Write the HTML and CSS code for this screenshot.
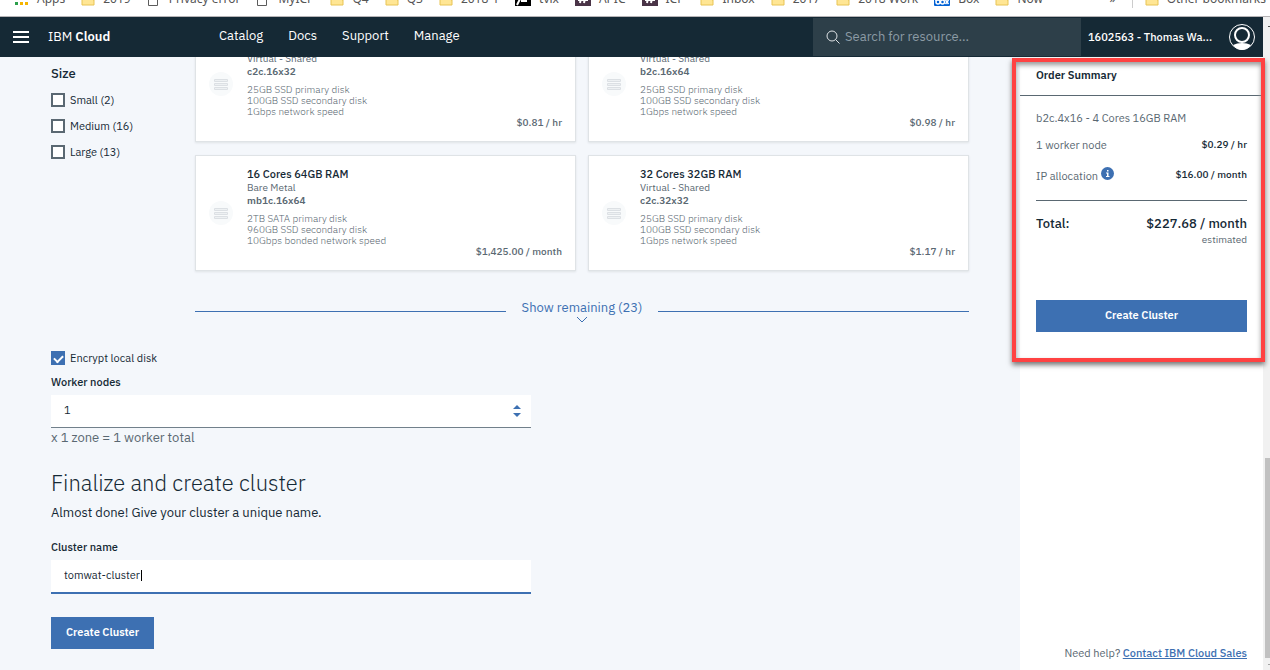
FILE: index.html
```html
<!DOCTYPE html>
<html lang="en">
<head>
<meta charset="utf-8">
<title>IBM Cloud - Create cluster</title>
<link rel="stylesheet" href="styles.css">
</head>
<body>
<svg class="defs" aria-hidden="true">
  <symbol id="folder" viewBox="0 0 14 16"><path d="M1 3h9l2 2v5h1v5H1z" fill="#ffe694" stroke="#e8c455"/></symbol>
  <symbol id="page" viewBox="0 0 14 16"><path d="M1.500 1.500h9v14h-9z" fill="#fff" stroke="#5c5c5c"/></symbol>
  <symbol id="hash" viewBox="0 0 16 16"><path d="M0 0h16v16H0z" fill="#4a3447"/><path d="M7 3L5 13M11 3L9 13M3 6h10M3 10h10" stroke="#fff" stroke-width="2"/></symbol>
  <symbol id="server" viewBox="0 0 24 24"><circle cx="12" cy="12" r="12" fill="#f8fafb"/><path d="M5.500 7.500h13v2h-13zM5.500 11.500h13v2h-13zM5.500 15.500h13v2h-13z" fill="#eef1f3" stroke="#dce0e4"/></symbol>
</svg>
<nav class="bookmarks" aria-label="Bookmarks">
  <a href="#"><svg width="14" height="16"><path d="M0 12h3v3H0z" fill="#2c9f4b"/><path d="M5 12h3v3H5zM10 12h3v3h-3z" fill="#f5b400"/></svg>Apps</a>
  <a href="#"><svg width="14" height="16"><use href="#folder"/></svg>2019</a>
  <a href="#"><svg width="14" height="16"><use href="#page"/></svg>Privacy error</a>
  <a href="#"><svg width="14" height="16"><use href="#page"/></svg>MyICP</a>
  <a href="#"><svg width="14" height="16"><use href="#folder"/></svg>Q4</a>
  <a href="#"><svg width="14" height="16"><use href="#folder"/></svg>Q3</a>
  <a href="#"><svg width="14" height="16"><use href="#folder"/></svg>2018-1</a>
  <a href="#"><svg width="16" height="16"><path d="M0 0h16v16H0z" fill="#000"/><path d="M2 15l4-8M6 11h5v-3h4" fill="none" stroke="#fff" stroke-width="2"/></svg>tvix</a>
  <a href="#"><svg width="16" height="16"><use href="#hash"/></svg>APIC</a>
  <a href="#"><svg width="16" height="16"><use href="#hash"/></svg>ICP</a>
  <a href="#"><svg width="14" height="16"><use href="#folder"/></svg>Inbox</a>
  <a href="#"><svg width="14" height="16"><use href="#folder"/></svg>2017</a>
  <a href="#"><svg width="14" height="16"><use href="#folder"/></svg>2018 Work</a>
  <a href="#"><svg width="16" height="16"><rect width="16" height="16" rx="1" fill="#0061d5"/><g fill="none" stroke="#fff" stroke-width="1.500"><path d="M2 7v4"/><circle cx="4" cy="12" r="2"/><circle cx="8.500" cy="12" r="2"/><path d="M11.500 10l3 4M14.500 10l-3 4"/></g></svg>Box</a>
  <a href="#"><svg width="14" height="16"><use href="#folder"/></svg>Now</a>
  <span class="more">»</span>
  <a class="other" href="#"><svg width="14" height="16"><use href="#folder"/></svg>Other bookmarks</a>
</nav>
<div class="window">
  <div class="app">
    <header class="header">
      <button class="menu" aria-label="Menu"><svg width="16" height="12"><path d="M0 1h16M0 6h16M0 11h16" stroke="#fff" stroke-width="2"/></svg></button>
      <a class="brand" href="#">IBM <b>Cloud</b></a>
      <nav class="nav"><a href="#">Catalog</a><a href="#">Docs</a><a href="#">Support</a><a href="#">Manage</a></nav>
      <label class="search">
        <svg width="14" height="14" fill="none" stroke="#dfe3e6"><circle cx="6" cy="6" r="5"/><path d="M9.500 9.500L13.500 13.500"/></svg>
        <input type="text" placeholder="Search for resource..." aria-label="Search for resource">
      </label>
      <button class="account">1602563 - Thomas Wa...
        <svg width="26" height="26" viewBox="0 0 26 26"><circle cx="13" cy="13" r="12.500" fill="none" stroke="#fff"/><path d="M4 21q4-2 9-2t9 2q-4 5-9 5t-9-5z" fill="#fff"/><circle cx="13" cy="11" r="7" fill="#152935" stroke="#fff" stroke-width="2"/></svg>
      </button>
    </header>
    <div class="columns">
      <main class="main">
        <div class="picker">
          <fieldset class="sizes">
            <legend>Size</legend>
            <label><input type="checkbox">Small (2)</label>
            <label><input type="checkbox">Medium (16)</label>
            <label><input type="checkbox">Large (13)</label>
          </fieldset>
          <div class="flavors">
            <div class="cards">
              <article class="card card-cut"><svg width="24" height="24"><use href="#server"/></svg><div class="info"><p class="kind">Virtual - Shared</p><p class="code">c2c.16x32</p><ul><li>25GB SSD primary disk</li><li>100GB SSD secondary disk</li><li>1Gbps network speed</li></ul></div><p class="price">$0.81 / hr</p></article>
              <article class="card card-cut"><svg width="24" height="24"><use href="#server"/></svg><div class="info"><p class="kind">Virtual - Shared</p><p class="code">b2c.16x64</p><ul><li>25GB SSD primary disk</li><li>100GB SSD secondary disk</li><li>1Gbps network speed</li></ul></div><p class="price">$0.98 / hr</p></article>
              <article class="card"><svg width="24" height="24"><use href="#server"/></svg><div class="info"><h3>16 Cores 64GB RAM</h3><p class="kind">Bare Metal</p><p class="code">mb1c.16x64</p><ul><li>2TB SATA primary disk</li><li>960GB SSD secondary disk</li><li>10Gbps bonded network speed</li></ul></div><p class="price">$1,425.00 / month</p></article>
              <article class="card"><svg width="24" height="24"><use href="#server"/></svg><div class="info"><h3>32 Cores 32GB RAM</h3><p class="kind">Virtual - Shared</p><p class="code">c2c.32x32</p><ul><li>25GB SSD primary disk</li><li>100GB SSD secondary disk</li><li>1Gbps network speed</li></ul></div><p class="price">$1.17 / hr</p></article>
            </div>
            <button class="remaining"><span>Show remaining (23)<svg width="12" height="7"><path d="M1 1l5 5 5-5" fill="none" stroke="#3d70b2"/></svg></span></button>
          </div>
        </div>
        <form class="form">
          <label class="encrypt"><input type="checkbox" checked>Encrypt local disk</label>
          <label class="field-label" for="nodes">Worker nodes</label>
          <div class="field">
            <input id="nodes" type="number" value="1">
            <svg class="stepper" width="8" height="12" fill="#3d70b2"><path d="M0 4l4-4 4 4zM0 8h8l-4 4z"/></svg>
          </div>
          <p class="hint">x 1 zone = 1 worker total</p>
          <h2>Finalize and create cluster</h2>
          <p class="lead">Almost done! Give your cluster a unique name.</p>
          <label class="field-label" for="name">Cluster name</label>
          <div class="field field-active">
            <input id="name" type="text" value="tomwat-cluster">
            <span class="caret"></span>
          </div>
          <button class="primary" type="button">Create Cluster</button>
        </form>
      </main>
      <aside class="summary">
        <h2>Order Summary</h2>
        <div class="order">
          <p class="machine">b2c.4x16 - 4 Cores 16GB RAM</p>
          <p class="row">1 worker node<b>$0.29 / hr</b></p>
          <p class="row ip"><span>IP allocation <svg width="13" height="13"><circle cx="6.500" cy="6.500" r="6.500" fill="#3d70b2"/><path d="M6 3h1.500v1.500H6zM5 5.500h2.500V9h1v1H5V9h1V6.500H5z" fill="#fff"/></svg></span><b>$16.00 / month</b></p>
          <p class="row total"><b>Total:</b><b>$227.68 / month</b></p>
          <p class="estimated">estimated</p>
          <button class="primary" type="button">Create Cluster</button>
        </div>
        <p class="help">Need help? <a href="#">Contact IBM Cloud Sales</a></p>
        <div class="highlight"></div>
      </aside>
    </div>
  </div>
  <div class="scrollbar"><i class="arrow-up"></i><div class="thumb"></div><i class="arrow-down"></i></div>
</div>
</body>
</html>
```
FILE: styles.css
```css
* { box-sizing: border-box; margin: 0; padding: 0; }
body { height: 100vh; overflow: hidden; display: flex; flex-direction: column; background: #f4f7fb; color: #152935; font: 11px/14px "IBM Plex Sans", Inter, sans-serif; }
button, input { font: inherit; color: inherit; border: 0; background: none; }
a { color: inherit; text-decoration: none; }
svg { flex: none; }
.defs { position: absolute; width: 0; height: 0; }

.bookmarks { flex: none; display: flex; gap: 16px; height: 17px; overflow: hidden; padding: 0 4px 0 15px; background: #fff; border-bottom: 1px solid #b6b4b6; color: #555; font: 12px/18px "Noto Sans", sans-serif; white-space: nowrap; }
.bookmarks a { display: flex; gap: 8px; height: 18px; margin-top: -10px; }
.more { margin: -10px 0 0 auto; }
.bookmarks .other { padding-left: 12px; border-left: 1px solid #ccc; }

.window { flex: 1; min-height: 0; display: flex; }
.app { flex: 1; min-width: 0; display: flex; flex-direction: column; }
.header { flex: none; display: flex; align-items: center; height: 40px; padding-left: 13px; background: #152935; color: #fff; font-size: 13px; }
.menu { display: flex; margin-right: 19px; }
.brand { width: 171px; }
.brand b { font-weight: 600; }
.nav { display: flex; gap: 25px; padding-bottom: 2px; font-weight: 400; }
.search { display: flex; align-items: center; gap: 5px; width: 268px; height: 38px; margin-left: auto; padding-left: 13px; background: #2d3f49; }
.search input { flex: 1; min-width: 0; }
.search input::placeholder { color: #8c9ba5; opacity: 1; }
.account { display: flex; align-items: center; justify-content: space-between; width: 182px; padding: 0 8px 0 7px; font-size: 11px; font-weight: 500; white-space: nowrap; }

.columns { flex: 1; min-height: 0; display: flex; }
.main { flex: 1; min-width: 0; padding: 0 51px; overflow: hidden; }
.picker { display: flex; }
.sizes { flex: none; width: 144px; padding-top: 10px; border: 0; }
.sizes legend { float: left; width: 100%; margin-bottom: 12px; font-size: 13px; font-weight: 500; }
.sizes label { clear: both; display: flex; align-items: center; gap: 5px; margin-bottom: 12px; }
input[type="checkbox"] { appearance: none; flex: none; width: 14px; height: 14px; border: 2px solid #5a6872; background: #fff; }
.encrypt input[type="checkbox"] { border: 0; background: #3d70b2; display: grid; place-items: center; }
.encrypt input::before { content: ""; width: 7px; height: 4px; border: solid #fff; border-width: 0 0 2px 2px; rotate: -45deg; margin-bottom: 1px; }

.flavors { flex: 1; min-width: 0; }
.cards { display: grid; grid-template-columns: 1fr 1fr; gap: 13px 12px; }
.card { display: flex; min-height: 116px; padding: 11px 13px 11px 13px; background: #fff; border: 1px solid #dfe3e6; box-shadow: 0 1px 2px #dfe3e6; }
.card-cut { min-height: 0; margin-top: -5px; padding-top: 0; border-top: 0; }
.card svg { align-self: flex-end; margin: 0 14px 34px 0; }
.info { flex: 1; color: #5a6872; line-height: 13px; font-size: 10px; }
.info h3 { color: #152935; font-size: 11px; line-height: 14px; font-weight: 500; }
.code { margin-bottom: 6px; font-weight: 600; }
.info ul { list-style: none; font-size: 10px; font-weight: 300; line-height: 11px; padding-bottom: 13px; }
.price { align-self: flex-end; color: #5a6872; font-size: 10px; font-weight: 500; line-height: 14px; }

.remaining { display: flex; gap: 16px; width: 100%; margin-top: 29px; color: #3d70b2; font-size: 13px; line-height: 16px; }
.remaining::before, .remaining::after { content: ""; flex: 1; height: 1px; margin-top: 11px; background: #3d70b2; }
.remaining svg { display: block; margin: 0 auto; }

.form { max-width: 480px; margin-top: 28px; }
.encrypt { display: flex; align-items: center; gap: 5px; margin-bottom: 10px; }
.field-label { display: block; margin-bottom: 6px; font-weight: 500; }
.field { position: relative; height: 33px; background: #fff; border-bottom: 1px solid #71808b; }
.field input { width: 100%; height: 32px; padding: 0 13px 2px; outline: 0; appearance: textfield; }
.field input::-webkit-inner-spin-button { appearance: none; }
.stepper { position: absolute; right: 10px; top: 10px; }
.hint { margin-top: 2px; color: #5a6872; font-size: 13px; line-height: 16px; }
.form h2 { margin-top: 22px; font-size: 22px; line-height: 30px; font-weight: 300; }
.lead { margin: 7px 0 19px; font-size: 13px; line-height: 16px; }
.field-active { height: 34px; border-bottom: 2px solid #3d70b2; }
.caret { position: absolute; left: 90px; top: 10px; width: 1px; height: 11px; background: #000; }
.primary { height: 32px; padding: 0 15px 2px; background: #3d70b2; color: #fff; font-weight: 600; white-space: nowrap; }
.form .primary { margin-top: 23px; }

.summary { position: relative; flex: none; display: flex; flex-direction: column; width: 243px; background: #fff; }
.summary h2 { height: 39px; padding: 11px 16px 0; border-bottom: 1px solid #5a6872; font-size: 11px; font-weight: 600; }
.order { padding: 15px 16px; color: #5a6872; }
.order b { color: #152935; font-size: 10px; font-weight: 500; }
.row { display: flex; justify-content: space-between; margin-top: 13px; }
.ip { margin-top: 15px; padding-bottom: 16px; border-bottom: 1px solid #5a6872; line-height: 16px; }
.ip svg { vertical-align: 0; }
.row.total { margin-top: 15px; line-height: 16px; }
.row.total b { font-size: 13px; }
.estimated { margin-bottom: 52px; text-align: right; font-size: 10px; line-height: 16px; }
.order .primary { width: 100%; }
.help { margin-top: auto; padding: 0 16px 10px; text-align: right; color: #5a6872; }
.help a { color: #3d70b2; font-weight: 500; text-decoration: underline; }
.highlight { position: absolute; inset: 1px -2px auto -8px; height: 304px; border: 4px solid #ff4242; box-shadow: 0 3px 5px #777, inset 0 3px 5px #999; }

.scrollbar { flex: none; display: flex; flex-direction: column; align-items: flex-end; width: 7px; background: #f1f1f1; }
.thumb { width: 5px; height: 200px; margin-top: auto; background: #c1c1c1; }
.arrow-up, .arrow-down { width: 3px; height: 12px; }
.arrow-up { background: linear-gradient(#505050, #505050) 1px 9px / 2px 1px no-repeat; }
.arrow-down { background: linear-gradient(#a3a3a3, #a3a3a3) 1px 6px / 2px 1px no-repeat; }
```
